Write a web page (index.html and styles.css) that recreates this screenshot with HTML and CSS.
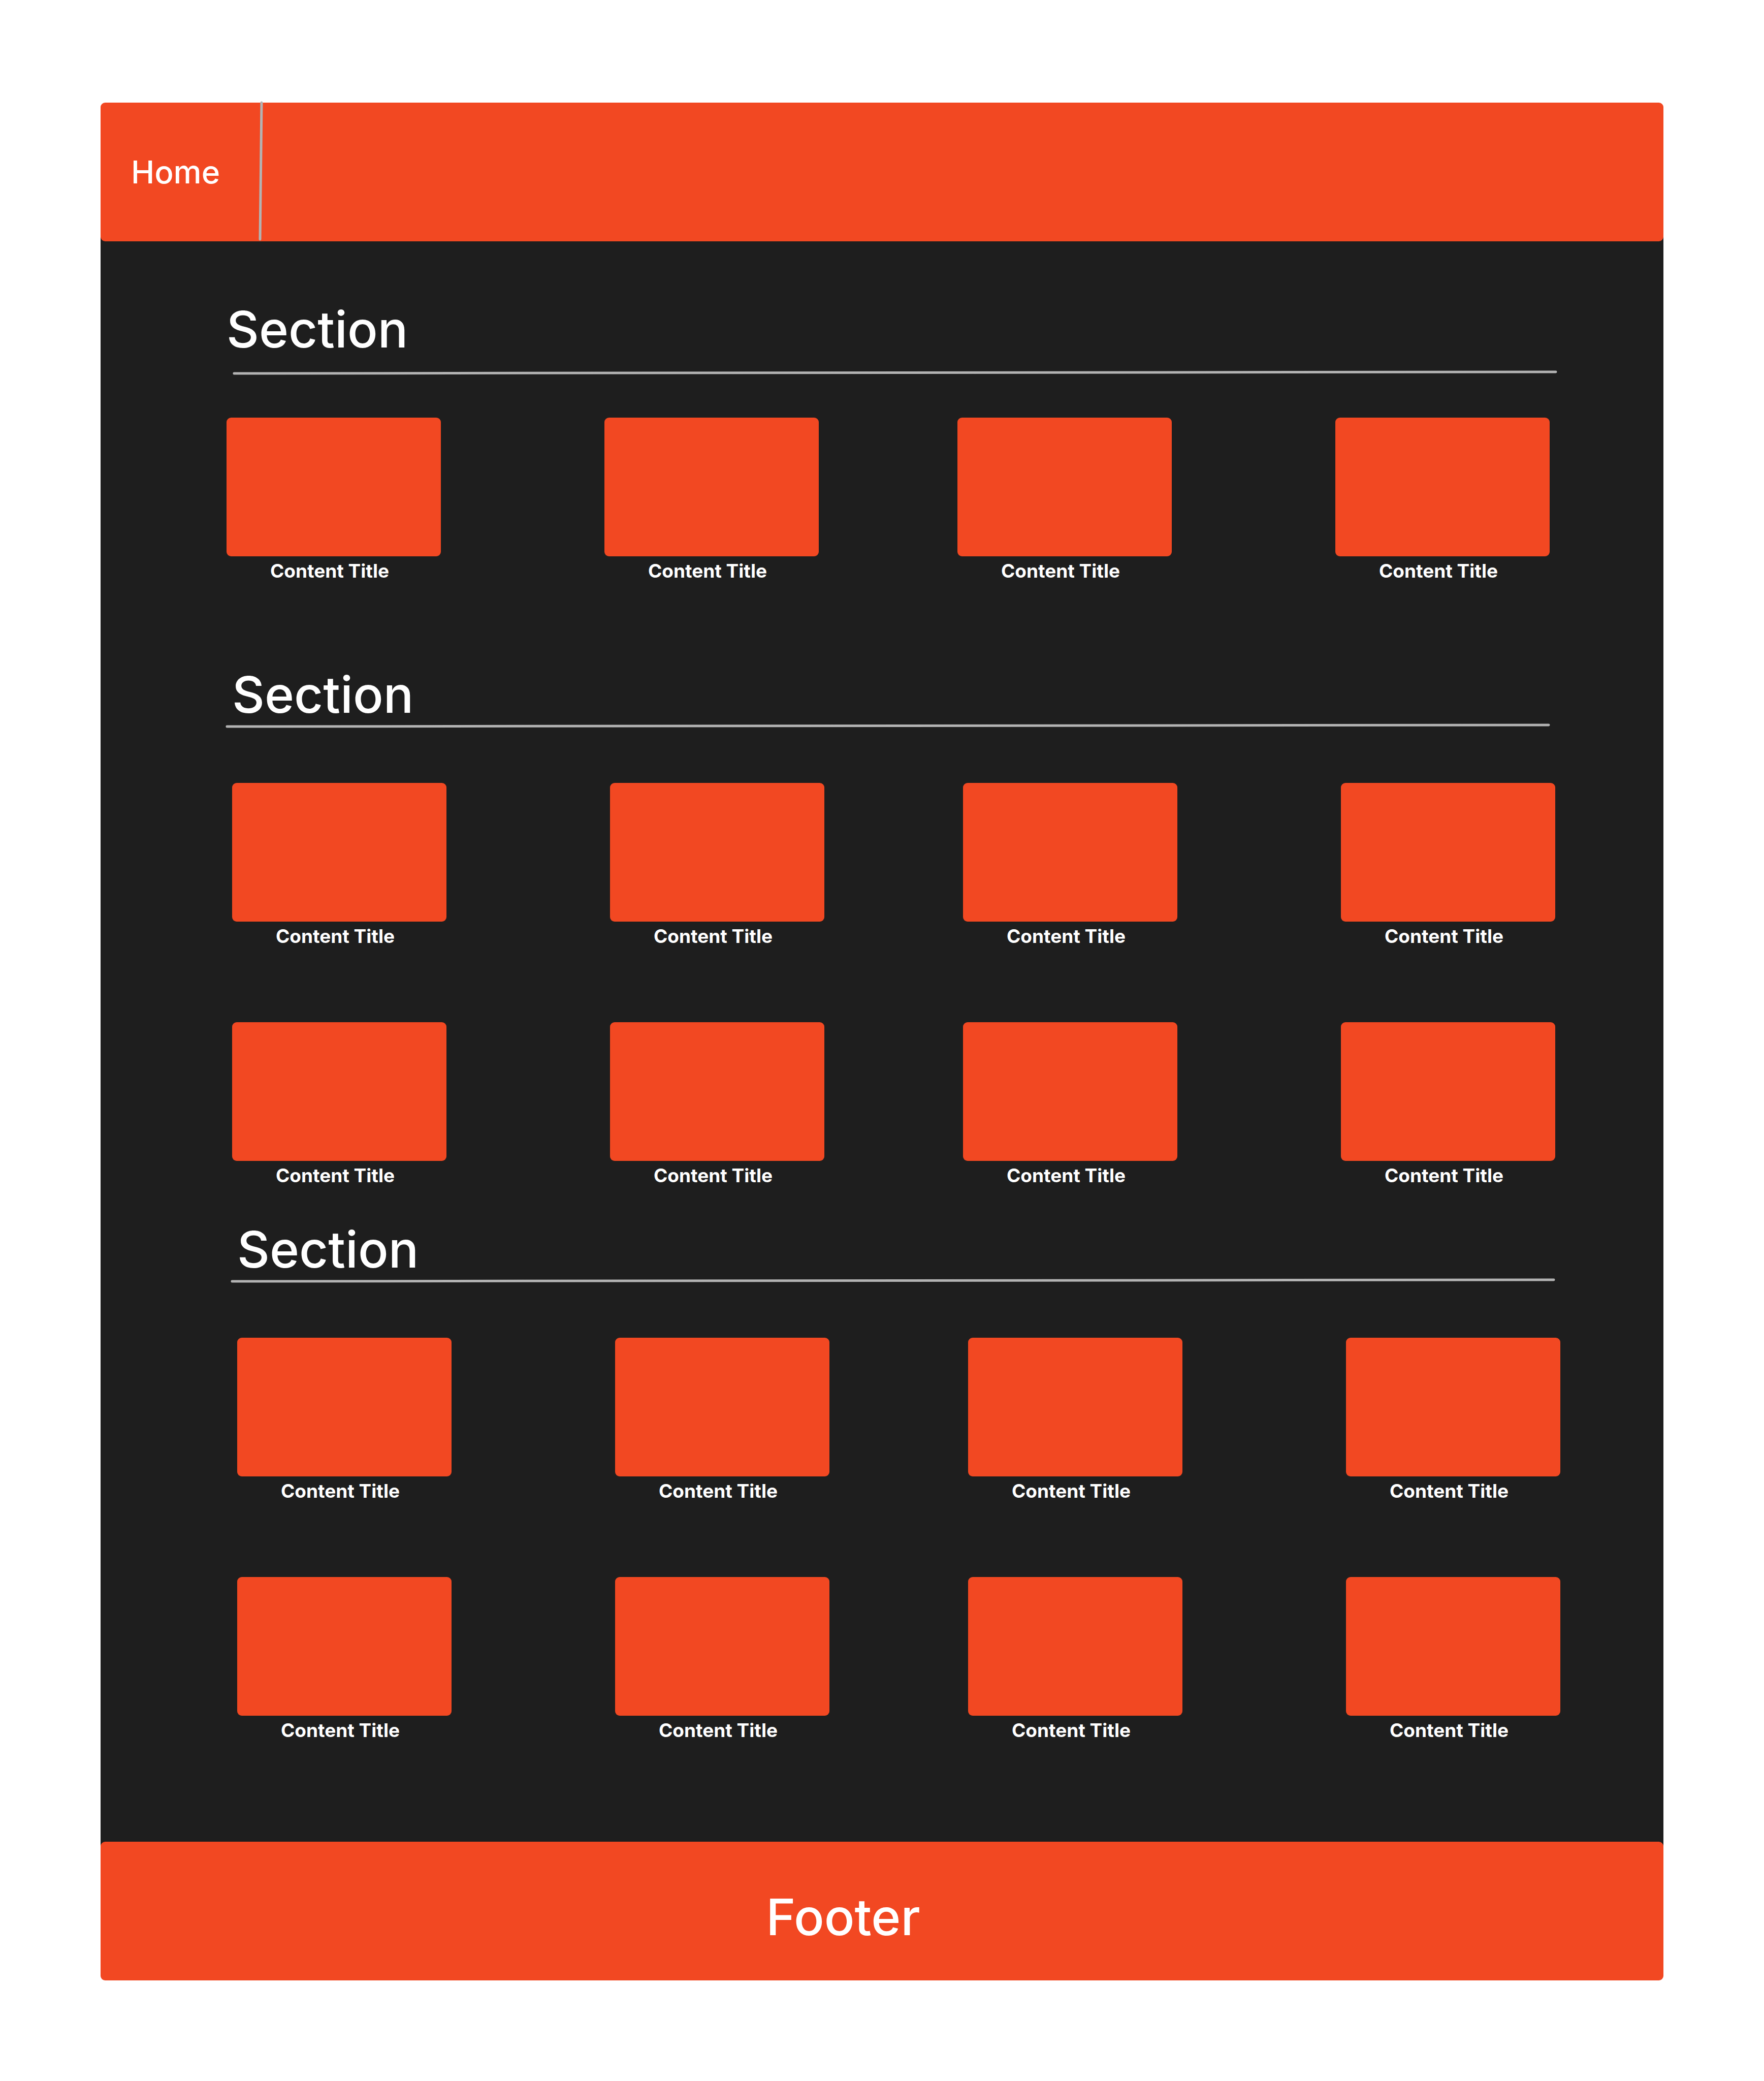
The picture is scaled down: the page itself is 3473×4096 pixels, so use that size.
FILE: index.html
```html
<!DOCTYPE html>
<html lang="en">
<head>
<meta charset="utf-8">
<meta name="viewport" content="width=device-width, initial-scale=1">
<title>Home</title>
<link rel="stylesheet" href="styles.css">
</head>
<body>
<header class="bar header">
  <nav class="nav">
    <a class="nav-link" href="#">Home</a>
    <svg class="nav-divider" aria-hidden="true"><line x1="4" y1="0" x2="1" y2="100%"/></svg>
  </nav>
</header>
<main class="main">
  <section class="section section-first">
    <div class="section-head">
      <h2 class="section-title">Section</h2>
      <svg class="rule" aria-hidden="true"><line x1="3" y1="5" x2="100%" y2="2"/></svg>
    </div>
    <div class="cards">
      <a class="card" href="#"><span class="thumb"></span><span class="label">Content Title</span></a>
      <a class="card" href="#"><span class="thumb"></span><span class="label">Content Title</span></a>
      <a class="card" href="#"><span class="thumb"></span><span class="label">Content Title</span></a>
      <a class="card" href="#"><span class="thumb"></span><span class="label">Content Title</span></a>
    </div>
  </section>
  <section class="section section-second">
    <div class="section-head">
      <h2 class="section-title">Section</h2>
      <svg class="rule" aria-hidden="true"><line x1="3" y1="5" x2="100%" y2="2"/></svg>
    </div>
    <div class="cards">
      <a class="card" href="#"><span class="thumb"></span><span class="label">Content Title</span></a>
      <a class="card" href="#"><span class="thumb"></span><span class="label">Content Title</span></a>
      <a class="card" href="#"><span class="thumb"></span><span class="label">Content Title</span></a>
      <a class="card" href="#"><span class="thumb"></span><span class="label">Content Title</span></a>
      <a class="card" href="#"><span class="thumb"></span><span class="label">Content Title</span></a>
      <a class="card" href="#"><span class="thumb"></span><span class="label">Content Title</span></a>
      <a class="card" href="#"><span class="thumb"></span><span class="label">Content Title</span></a>
      <a class="card" href="#"><span class="thumb"></span><span class="label">Content Title</span></a>
    </div>
  </section>
  <section class="section section-third">
    <div class="section-head">
      <h2 class="section-title">Section</h2>
      <svg class="rule" aria-hidden="true"><line x1="3" y1="5" x2="100%" y2="2"/></svg>
    </div>
    <div class="cards">
      <a class="card" href="#"><span class="thumb"></span><span class="label">Content Title</span></a>
      <a class="card" href="#"><span class="thumb"></span><span class="label">Content Title</span></a>
      <a class="card" href="#"><span class="thumb"></span><span class="label">Content Title</span></a>
      <a class="card" href="#"><span class="thumb"></span><span class="label">Content Title</span></a>
      <a class="card" href="#"><span class="thumb"></span><span class="label">Content Title</span></a>
      <a class="card" href="#"><span class="thumb"></span><span class="label">Content Title</span></a>
      <a class="card" href="#"><span class="thumb"></span><span class="label">Content Title</span></a>
      <a class="card" href="#"><span class="thumb"></span><span class="label">Content Title</span></a>
    </div>
  </section>
</main>
<footer class="bar footer">
  <p class="footer-text">Footer</p>
</footer>
</body>
</html>
```

FILE: styles.css
```css
:root {
  --accent: #f24822;
  --surface: #1e1e1e;
  --line: #b3b3b3;
  --radius: 9px;
}

* {
  box-sizing: border-box;
}

body {
  margin: 0;
  padding: 202px 198px 197px;
  background: #fff;
  color: #fff;
  font-family: Inter, "Liberation Sans", sans-serif;
  font-weight: 500;
}

a {
  color: inherit;
  text-decoration: none;
}

.bar {
  position: relative;
  min-height: 273px;
  border-radius: var(--radius);
  background: var(--accent);
}

.header {
  display: flex;
}

.nav {
  display: flex;
  align-items: center;
  padding-left: 60px;
}

.nav-link {
  min-width: 253px;
  font-size: 62px;
  line-height: 76px;
}

.nav-divider {
  width: 5px;
  height: 269px;
  margin-bottom: 4px;
}

.nav-divider,
.rule {
  display: block;
  overflow: visible;
  stroke: var(--line);
  stroke-width: 5px;
  stroke-linecap: round;
}

/* Runs under both bars so their rounded corners show the dark surface. */
.main {
  margin: -12px 0;
  padding: 127px 0 209px;
  background: var(--surface);
}

.section-first {
  margin: 0 224px 163px 248px;
}

.section-second {
  margin: 0 213px 65px 259px;
}

.section-third {
  margin: 0 203px 0 269px;
}

.section-head {
  min-height: 232px;
}

.section-title {
  margin: 0;
  font-size: 99px;
  font-weight: 500;
  line-height: 116px;
}

.rule {
  width: 100%;
  height: 6px;
  margin-left: -13px;
}

.section-first .rule {
  margin-top: 24px;
  margin-left: 12px;
}

.cards {
  display: grid;
  grid-template-columns: 422fr 322fr 422fr 273fr 422fr 322fr 422fr;
  row-gap: 147px;
}

.card:nth-child(4n + 1) { grid-column: 1; }
.card:nth-child(4n + 2) { grid-column: 3; }
.card:nth-child(4n + 3) { grid-column: 5; }
.card:nth-child(4n + 4) { grid-column: 7; }

.card {
  display: flex;
  flex-direction: column;
  gap: 7px;
}

.thumb {
  aspect-ratio: 422 / 273;
  border-radius: var(--radius);
  background: var(--accent);
}

.label {
  padding-right: 16px;
  font-size: 37px;
  font-weight: 700;
  line-height: 44px;
  text-align: center;
}

.footer {
  padding: 90px 153px 67px 0;
}

.footer-text {
  margin: 0;
  font-size: 99px;
  line-height: 116px;
  text-align: center;
}
```
